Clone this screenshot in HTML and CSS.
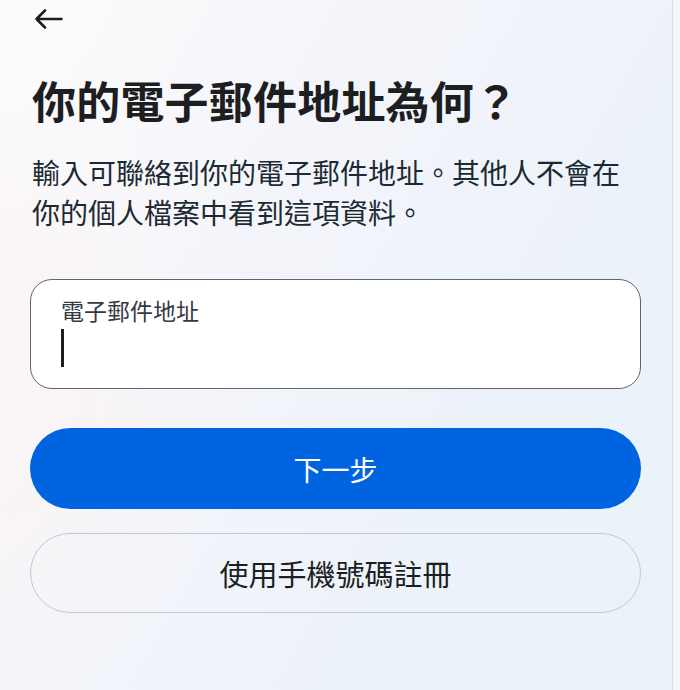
FILE: index.html
```html
<!DOCTYPE html>
<html lang="zh-Hant">
<head>
<meta charset="utf-8">
<title>你的電子郵件地址為何？</title>
<link rel="stylesheet" href="styles.css">
</head>
<body>
<div class="screen">
  <header class="topbar">
    <svg class="back" viewBox="0 0 30 22" width="30" height="22" aria-label="返回">
      <path d="M28.5 11H3.5M12 2.5L3.5 11L12 19.5" fill="none" stroke="#1c1e21" stroke-width="2.6" stroke-linecap="round" stroke-linejoin="round"/>
    </svg>
  </header>
  <main class="content">
    <h1 class="title">你的電子郵件地址為何？</h1>
    <p class="subtitle">輸入可聯絡到你的電子郵件地址。其他人不會在你的個人檔案中看到這項資料。</p>
    <div class="field">
      <span class="field-label">電子郵件地址</span>
      <span class="caret"></span>
    </div>
    <button class="btn btn-primary">下一步</button>
    <button class="btn btn-secondary">使用手機號碼註冊</button>
  </main>
</div>
</body>
</html>
```

FILE: styles.css
```css
html, body {
  margin: 0;
  padding: 0;
}
body {
  width: 680px;
  height: 690px;
  overflow: hidden;
  background: #f3f7fb;
  font-family: "Noto Sans CJK TC", "Noto Sans", sans-serif;
  color: #1c1e21;
}
.screen {
  width: 673px;
  height: 690px;
  box-sizing: border-box;
  border-right: 1px solid #d9e0e8;
  background:
    radial-gradient(ellipse 240px 340px at 0% 55%, rgba(252, 243, 243, 0.8), rgba(252, 243, 243, 0) 100%),
    linear-gradient(120deg, #fdfcfd 0%, #f4f5fa 35%, #ecf2fa 70%, #eaf3f8 100%);
}
.topbar {
  height: 38px;
  display: flex;
  align-items: center;
  padding-left: 33px;
}
.back {
  display: block;
}
.content {
  padding: 0 31px 0 30px;
  display: flex;
  flex-direction: column;
}
.title {
  margin: 34px 0 0 2px;
  font-size: 44px;
  line-height: 56px;
  font-weight: 700;
  color: #1c1e21;
  letter-spacing: 0.2px;
}
.subtitle {
  margin: 24px 0 0 2px;
  font-size: 28px;
  line-height: 40px;
  font-weight: 400;
  color: #1c2b33;
}
.field {
  margin-top: 47px;
  height: 110px;
  box-sizing: border-box;
  border: 1.5px solid #5f6672;
  border-radius: 22px;
  background: #ffffff;
  padding: 15px 30px 0 30px;
  display: flex;
  flex-direction: column;
  align-items: flex-start;
}
.field-label {
  font-size: 23px;
  line-height: 31px;
  color: #353a42;
}
.caret {
  margin-top: 3px;
  width: 3px;
  height: 38px;
  background: #1c1e21;
}
.btn {
  display: flex;
  align-items: center;
  justify-content: center;
  width: 100%;
  box-sizing: border-box;
  border-radius: 999px;
  font-family: "Noto Sans CJK TC", "Noto Sans", sans-serif;
  font-weight: 400;
  padding: 0;
  cursor: pointer;
}
.btn-primary {
  margin-top: 39px;
  height: 81px;
  border: none;
  background: #0064e0;
  color: #ffffff;
  font-size: 28px;
}
.btn-secondary {
  margin-top: 24px;
  height: 80px;
  border: 1px solid #c3c8ce;
  background: transparent;
  color: #1c1e21;
  font-size: 29px;
}
```
